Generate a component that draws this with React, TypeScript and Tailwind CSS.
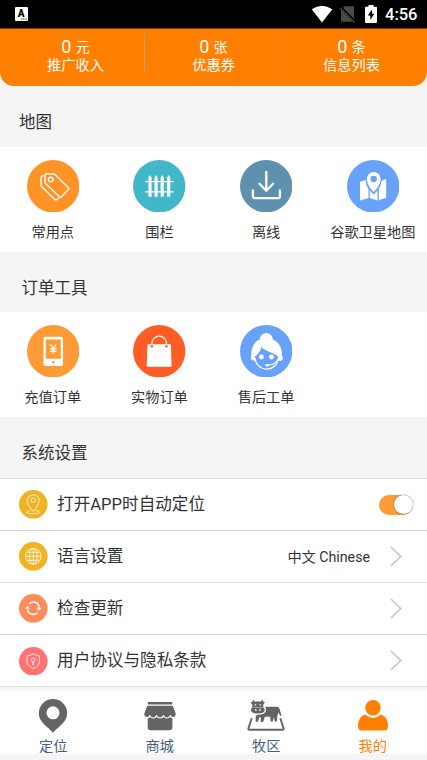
import type { ReactNode } from "react";

const TagIcon = () => (
    <g fill="none" stroke="#fff" strokeWidth="1.4" strokeLinejoin="round" strokeLinecap="round">
        <path d="M19.5 13.8h6.6q1 0 1.8.8l13.5 13.2q.9.9 0 1.800l-7 7.200q-1 1-2 0L18.800 23.800q-.8-.8-.8-1.800v-6.700q0-1.500 1.500-1.500z" />
        <path d="M16 15.700q-2 .3-2 2.300v7q0 1 .8 1.800L27.600 39.200q1.400 1.400 2.800 0l.8-.9" />
        <circle cx="23.600" cy="19.500" r="2.300" />
    </g>
);

const FenceIcon = () => (
    <g fill="#fff">
        {[17, 23.1, 29.2, 35.700].map((x) => (
            <path key={x} d={`M${x} 15l1.600 2.400v3l-.7 1.300.7 1.300v7.500l-.7 1.200.7 1.300v3.700h-3.200v-3.700l.7-1.300-.7-1.200V23l.7-1.300-.7-1.300v-3z`} />
        ))}
        <path d="M12 21h28.700v1.300H12zM12 31.200h28.700v1.300H12z" />
    </g>
);

const DownloadIcon = () => (
    <g fill="none" stroke="#fff" strokeWidth="2.300" strokeLinecap="round" strokeLinejoin="round">
        <path d="M26.300 12v18.500M19.500 23.700l6.800 7 6.800-7M12.900 30.500v5.700q0 2 2 2h23q2 0 2-2v-5.700" />
    </g>
);

const MapIcon = () => (
    <g fill="#fff">
        <path d="M13 21.800l5.500-1.900q.2 5 3 9v9L13 40.500zM22.700 30.400l4 4 3.800-4v10l-7.800-2.500zM31.800 29q2.600-4.200 2.800-8.200L39.200 19v18.800l-7.400 2.500z" />
        <path fillRule="evenodd" d="M26.700 12a6.900 6.900 0 0 1 6.900 6.900c0 4.500-3.500 9.600-6.900 13.200-3.400-3.600-6.900-8.700-6.900-13.200a6.900 6.900 0 0 1 6.900-6.900zm0 3.800a3.200 3.200 0 1 0 0 6.400 3.200 3.200 0 0 0 0-6.400z" />
    </g>
);

const PhoneIcon = () => (
    <g>
        <rect x="16.500" y="11.700" width="19.500" height="29.300" rx="2" fill="#fff" />
        <path d="M18.800 14.500h15v19.200h-15z" fill="#ff9b34" />
        <circle cx="26.300" cy="37.300" r="1.300" fill="#ff9b34" />
        <path d="M23.300 19.300l3 4 3-4M26.300 23.300v5.500M23 23.700h6.600M23 26.200h6.600" fill="none" stroke="#fff" strokeWidth="1.200" />
    </g>
);

const BagIcon = () => (
    <g>
        <path d="M15 19.200h22.300q.6 0 .6.600l.7 21.200q0 .8-.8.800H14.500q-.8 0-.8-.8l.7-21.200q0-.6.600-.6z" fill="#fff" />
        <path d="M18.900 21v-2.500a7.300 7.300 0 0 1 14.600 0V21" fill="none" stroke="#fff" strokeWidth="1.200" />
        <circle cx="18.900" cy="21.300" r="1.200" fill="#ff5c26" />
        <circle cx="33.500" cy="21.300" r="1.200" fill="#ff5c26" />
    </g>
);

const AgentIcon = () => (
    <g fill="#fff">
        <circle cx="26.300" cy="14.400" r="6.400" />
        <path d="M11.300 30.500C10.800 19.500 17 13.300 26.300 13.300s15.900 6 15.700 17.200c1.500 2 .8 4.500-.8 5.200-1 .5-2 .3-3-.5H15.500c-2.500 1.500-6-1.200-4.200-4.700z" />
        <path d="M21.500 21.300c.4 4.300 11 5.400 16.600 10.500C38.700 39 33 44 26.500 44c-6.800 0-11.600-5.500-11.600-12.500 3-1.700 5.900-5.800 6.600-10.200z" fill="#66a1fa" />
        <path d="M15 33a11.700 11.700 0 0 0 23.200 1.500" fill="none" stroke="#fff" strokeWidth="1.300" />
        <circle cx="21.400" cy="32" r="2.400" />
        <circle cx="31.500" cy="32" r="2.400" />
        <path d="M38.800 33.200q-3.300 6.400-10.300 6.800" fill="none" stroke="#fff" strokeWidth="1.100" />
        <ellipse cx="27.200" cy="40.200" rx="2.200" ry="1.200" />
    </g>
);

interface Tool {
    label: string;
    color: string;
    icon: ReactNode;
}

const mapTools: Tool[] = [
    { label: "常用点", color: "#ff9326", icon: <TagIcon /> },
    { label: "围栏", color: "#42b7ca", icon: <FenceIcon /> },
    { label: "离线", color: "#5e91ad", icon: <DownloadIcon /> },
    { label: "谷歌卫星地图", color: "#66a1fa", icon: <MapIcon /> },
];

const orderTools: Tool[] = [
    { label: "充值订单", color: "#ff9b34", icon: <PhoneIcon /> },
    { label: "实物订单", color: "#ff5c26", icon: <BagIcon /> },
    { label: "售后工单", color: "#66a1fa", icon: <AgentIcon /> },
];

const ToolGrid = ({ tools }: { tools: Tool[] }) => (
    <div className="grid h-[105px] grid-cols-[106.700px_106.700px_106.700px_106.700px] bg-white pt-[13px]">
        {tools.map((tool) => (
            <div key={tool.label} className="flex flex-col items-center pr-[1.200px]">
                <svg viewBox="0 0 52.400 52.400" className="size-[52.400px] shrink-0">
                    <circle cx="26.200" cy="26.200" r="26.200" fill={tool.color} />
                    {tool.icon}
                </svg>
                <span className="mt-[9.600px] text-[14.200px] leading-5 whitespace-nowrap">{tool.label}</span>
            </div>
        ))}
    </div>
);

const stats = [
    { value: "0", unit: "元", label: "推广收入", divider: "border-[#b5a08a]" },
    { value: "0", unit: "张", label: "优惠券", divider: "border-[#ef8524]" },
    { value: "0", unit: "条", label: "信息列表", divider: "border-transparent" },
];

const settings = [
    {
        label: "打开APP时自动定位",
        color: "#f0b323",
        icon: (
            <g>
                <path d="M14.200 21.500c-3-4-6-7-6-10.700a6 6 0 0 1 12 0c0 3.700-3 6.700-6 10.700z" />
                <circle cx="14.200" cy="10.300" r="2.200" />
                <path d="M11.300 20.500c-5 .8-5.500 3.200 2.900 3.200s7.900-2.400 2.900-3.200" />
            </g>
        ),
        control: "switch",
        border: "border-[#d3d3d3]",
    },
    {
        label: "语言设置",
        color: "#f0b323",
        icon: (
            <g>
                <circle cx="14.300" cy="14.300" r="7.800" />
                <ellipse cx="14.300" cy="14.300" rx="3.800" ry="7.800" />
                <path d="M14.300 6.500v15.600M6.500 14.300h15.600M7.800 10.300h13M7.800 18.300h13" />
            </g>
        ),
        value: "中文 Chinese",
        control: "link",
        border: "border-[#e2e2e2]",
    },
    {
        label: "检查更新",
        color: "#ff8b5b",
        icon: (
            <g strokeWidth="1.500">
                <path d="M10.200 9.800a5.800 5.800 0 0 1 9.900 4.200M18.300 18.700a5.800 5.800 0 0 1-9.900-4.200" />
                <path d="M18 14h4.300l-2.200 2.500zM6.300 14.500h4.300l-2.200-2.500z" fill="#fff" strokeWidth=".4" />
            </g>
        ),
        control: "link",
        border: "border-[#d3d3d3]",
    },
    {
        label: "用户协议与隐私条款",
        color: "#ff7373",
        icon: (
            <g>
                <path d="M14.200 6.800q3 2 6.200 2v5.600q0 4.700-6.200 7.300Q8 19 8 14.400V8.800q3.200 0 6.200-2z" />
                <circle cx="14.200" cy="12.900" r="1.800" />
                <path d="M14.200 14.700v3.500" strokeWidth="1.300" />
            </g>
        ),
        control: "link",
        border: "border-[#dedede]",
    },
];

const tabs = [
    {
        label: "定位",
        active: false,
        icon: (
            <path fillRule="evenodd" d="M20 1a14.200 14.200 0 0 1 14.200 14.200C34.200 24 26 28 20 34.700 14 28 5.800 24 5.800 15.200A14.200 14.200 0 0 1 20 1zm0 7.300a6.500 6.500 0 1 0 0 13 6.500 6.500 0 0 0 0-13z" />
        ),
    },
    {
        label: "商城",
        active: false,
        icon: (
            <g>
                <rect x="7.700" y="4" width="24.700" height="2.400" rx="1" />
                <path d="M8.200 7.700h23.600q.9 0 1.300.8l2.600 7q0 3.300-2.400 3.600-2.300-.1-3-2.300-1.500 2.700-3.500 2.700t-3.400-2.700q-1.400 2.700-3.400 2.700t-3.400-2.700q-1.400 2.700-3.400 2.700t-3.500-2.700q-.7 2.200-3 2.300-2.400-.3-2.400-3.600l2.600-7q.4-.8 1.300-.8z" />
                <path d="M7.700 20.300q1.400-.2 2.500-1.400 3.200 3.300 6.400 0 3.500 3.300 7 0 3.200 3.300 6.400 0 1 1.200 2.400 1.400v9.500q0 2.400-2.400 2.400H10.100q-2.400 0-2.400-2.400z" />
            </g>
        ),
    },
    {
        label: "牧区",
        active: false,
        icon: (
            <g>
                <path d="M7.300 1.300l.9 2.200h7l1.100-2.200 1 2.400 1.700.5-1.700 2.300v3q1.400.8 1.300 2.800-.3 3.300-6.800 3.300T5 12.300q0-2 1.300-2.800v-3L4.500 4.200l1.900-.5z" />
                <path d="M19.300 8.700h12q2 .5 2.900 4.300l1.300 4.500-1 .5-2.200-3.500-1 3.800-.3 5.200h-2.200l-.9-4.300-1.200 4.300h-2l-.6-4.700h-5.200l-1.800 5.200h-2.400l.1-4.800h-1.300l-1.700 4.500H9.700v-5.200l1-1.500q8.800-.5 9.300-4.500z" />
                <path d="M5.700 20.300L2.400 30.500q-.3 1.300 1 1.300h33.200q1.300 0 1-1.300l-3.300-10.200" fill="none" stroke="#646464" strokeWidth="1.900" />
                <path d="M8.700 6.300h1.500v1.300H8.700zM13.500 6.300H15v1.300h-1.500zM9 11.300h1.500v1.500H9zM13.200 11.300h1.500v1.500h-1.500z" fill="#fff" />
                <path d="M7 9.500h9.600" stroke="#fff" strokeWidth=".4" />
            </g>
        ),
    },
    {
        label: "我的",
        active: true,
        icon: (
            <g>
                <circle cx="20" cy="9.700" r="7.700" />
                <path d="M12.200 16.400q3.700 3.500 7.800 3.500t7.800-3.500q7.200 1.800 7.200 11.600 0 4.600-3.700 4.600H8.700Q5 32.600 5 28q0-9.800 7.200-11.600z" />
            </g>
        ),
    },
];

const StatusBar = () => (
    <div className="flex h-7 items-center justify-between bg-black pr-[9.500px] pl-[15px] text-white">
        <svg viewBox="0 0 13 14" className="h-[14px] w-[13px]">
            <rect width="13" height="14" rx="1" fill="#fff" />
            <text x="2.800" y="10" fontSize="10" fontWeight="900" fontFamily="Roboto">A</text>
            <path d="M6 12h6" stroke="#000" strokeWidth=".8" strokeDasharray="1.200 .5" />
        </svg>
        <div className="flex items-center">
            <svg viewBox="0 0 22 18" className="mr-[6px] h-[18px] w-[22px]">
                <path d="M.7 4.200Q11-2.800 21.300 4.200L11 17.500z" fill="#fff" />
            </svg>
            <svg viewBox="0 0 17 18" className="mr-[9px] h-[18px] w-[17px]">
                <path d="M5.500 1.300H15v15.500H2V5z" fill="#4a4a4a" />
                <path d="M1.300 2.200l14.500 14.500" stroke="#000" strokeWidth="3" />
                <path d="M1 3l14.500 14.500" stroke="#4a4a4a" strokeWidth="1.300" />
            </svg>
            <svg viewBox="0 0 12 18" className="mr-[8px] h-[18px] w-3">
                <path d="M3.500 0h5v1.800H11q1 0 1 1V17q0 1-1 1H1q-1 0-1-1V2.800q0-1 1-1h2.500z" fill="#fff" />
                <path d="M7 4.500l-4.200 6h2.500v4.500l4-6.300H7z" fill="#000" />
            </svg>
            <span className="relative top-px text-[16.500px] font-medium">4:56</span>
        </div>
    </div>
);

const SectionTitle = ({ children }: { children: ReactNode }) => (
    <h2 className="text-[16.500px] leading-6">{children}</h2>
);

const App = () => {
    return (
        <div className="flex h-[760px] w-[427px] flex-col overflow-hidden bg-[#f5f5f5] font-[Roboto,'Noto_Sans_CJK_SC',sans-serif] text-[#333]">
            <StatusBar />

            <header className="grid h-[58px] grid-cols-[138px_138px_138px] rounded-b-[14px] border-t border-[#7a3d00] bg-[#ff8000] pt-[5px] pl-[7px] text-white">
                {stats.map((stat) => (
                    <div key={stat.label} className={`flex h-[38px] flex-col items-center border-r pt-1 text-[14.200px] leading-[18px] ${stat.divider}`}>
                        <div className="flex h-[18px] items-center gap-1">
                            <span className="text-[18px]">{stat.value}</span>
                            <span>{stat.unit}</span>
                        </div>
                        <div>{stat.label}</div>
                    </div>
                ))}
            </header>

            <div className="flex h-[61px] items-center pt-[12px] pl-[19px]">
                <SectionTitle>地图</SectionTitle>
            </div>
            <ToolGrid tools={mapTools} />

            <div className="flex h-[60px] items-center pt-[13px] pl-[21.500px]">
                <SectionTitle>订单工具</SectionTitle>
            </div>
            <ToolGrid tools={orderTools} />

            <div className="flex h-[61px] items-center pt-[12px] pl-[21.500px]">
                <SectionTitle>系统设置</SectionTitle>
            </div>
            <div className="border-t border-[#e0e0e0] bg-white">
                {settings.map((item) => (
                    <div key={item.label} className={`flex h-[52.100px] items-center border-b pl-[19px] ${item.border} ${item.control === "switch" ? "pr-[14px]" : "pr-[25px]"}`}>
                        <svg viewBox="0 0 28.600 28.600" className="mr-[9.500px] size-[28.600px] shrink-0">
                            <circle cx="14.300" cy="14.300" r="14.300" fill={item.color} />
                            <g fill="none" stroke="#fff" strokeWidth=".8">{item.icon}</g>
                        </svg>
                        <span className="grow pt-[2px] text-[16.600px]">{item.label}</span>
                        {item.value && <span className="mr-5 pt-[2px] text-[14.200px]">{item.value}</span>}
                        {item.control === "switch" ? (
                            <div className="flex h-5 w-[34px] items-center justify-end rounded-full bg-[#ff9b34] p-[0.500px]">
                                <div className="size-[19px] rounded-full bg-white shadow-[0_0_1.500px_rgba(0,0,0,0.6)]" />
                            </div>
                        ) : (
                            <svg viewBox="0 0 12 21" className="h-[21px] w-3" fill="none" stroke="#c8c8c8" strokeWidth="1.700">
                                <path d="M1 1l9.700 9.500L1 20" />
                            </svg>
                        )}
                    </div>
                ))}
            </div>

            <nav className="mt-[2.600px] grid h-[64px] shrink-0 grid-cols-4 bg-white pt-2 pr-px">
                {tabs.map((tab) => (
                    <div key={tab.label} className={`flex flex-col items-center ${tab.active ? "text-[#ff8000]" : "text-[#495d80]"}`}>
                        <svg viewBox="0 0 40 36" className="h-9 w-10 shrink-0" fill={tab.active ? "#ff8000" : "#646464"}>
                            {tab.icon}
                        </svg>
                        <span className="mt-[2.200px] text-[14.200px] leading-5">{tab.label}</span>
                    </div>
                ))}
            </nav>
        </div>
    );
};

export default App;
